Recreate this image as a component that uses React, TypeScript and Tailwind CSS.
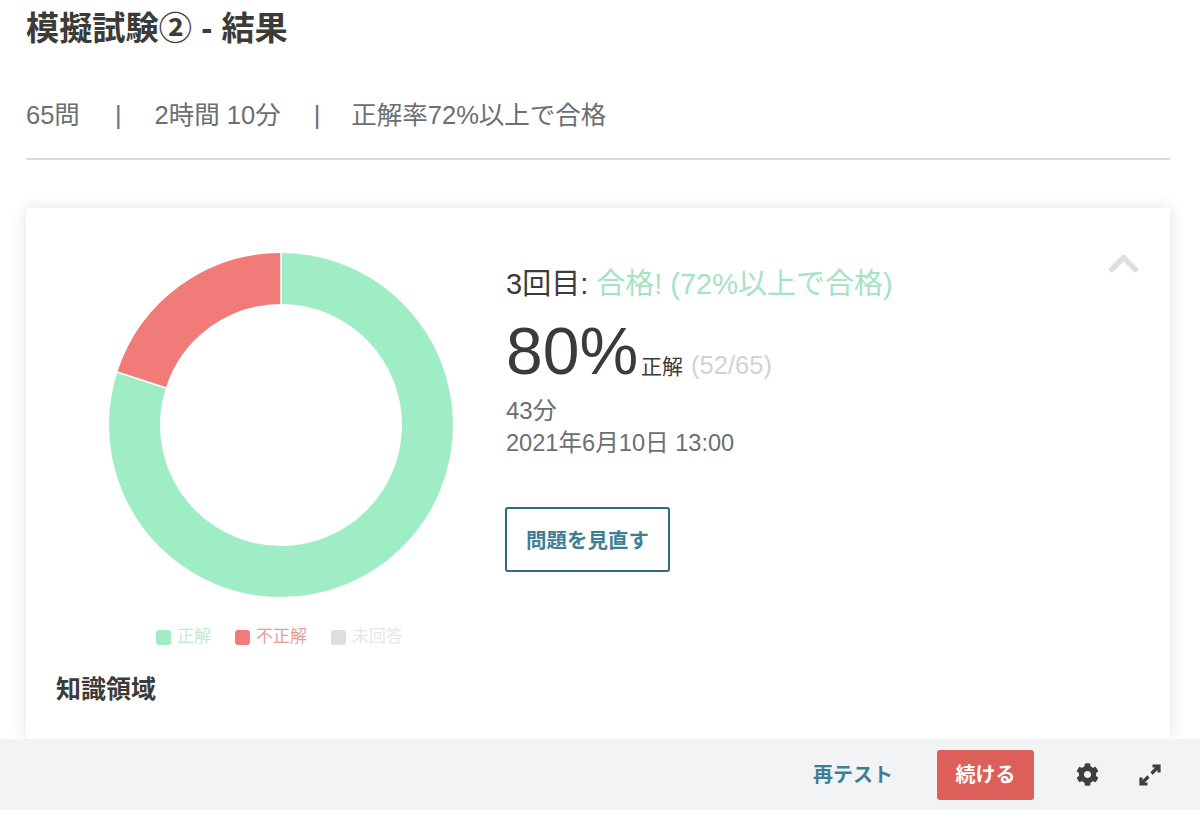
import { FaChevronUp, FaCog } from "react-icons/fa";

const FONT = "font-['Liberation_Sans','Noto_Sans_CJK_JP',sans-serif]";

const legend = [
  { label: "正解", box: "bg-[#9fedc5]", text: "text-[#bfe9d3]" },
  { label: "不正解", box: "bg-[#f07b78]", text: "text-[#e59c9a]" },
  { label: "未回答", box: "bg-[#dcdee0]", text: "text-[#e6e7e8]" },
];

function Donut() {
  const r = 146.5;
  const c = 2 * Math.PI * r;
  return (
    <svg width="346" height="346" viewBox="0 0 346 346" className="block">
      <g transform="rotate(-90 173 173)">
        <circle cx="173" cy="173" r={r} fill="none" stroke="#9fedc5" strokeWidth="51" strokeDasharray={`${c * 0.8} ${c}`} />
        <circle
          cx="173"
          cy="173"
          r={r}
          fill="none"
          stroke="#f07b78"
          strokeWidth="51"
          strokeDasharray={`${c * 0.2} ${c}`}
          strokeDashoffset={-c * 0.8}
        />
      </g>
      <line x1="173" y1="1" x2="173" y2="52" stroke="#fff" strokeWidth="1.5" />
      <line x1="9" y1="120" x2="58" y2="136" stroke="#fff" strokeWidth="1.5" />
    </svg>
  );
}

function ExpandIcon() {
  return (
    <svg width="24" height="24" viewBox="0 0 24 24" fill="none" stroke="#3e3e3e" strokeWidth="3.2" className="ml-[39px] block">
      <path d="M13.5 10.5 L20.5 3.5" />
      <path d="M14.5 3 H21 V9.5" />
      <path d="M10.5 13.5 L3.5 20.5" />
      <path d="M3 14.5 V21 H9.5" />
    </svg>
  );
}

export default function App() {
  return (
    <div className={`${FONT} flex h-[819px] w-[1200px] flex-col overflow-hidden bg-white`}>
      <main className="flex min-h-0 flex-1 flex-col overflow-hidden pr-[30px] pl-[26px]">
        <h1 className="mt-[7px] h-[44px] text-[33.2px] leading-[44px] font-bold text-[#3c3b37]">模擬試験② - 結果</h1>
        <div className="mt-[43px] flex h-[42px] items-center text-[25.5px] text-[#6a6f73]">
          <span>65問</span>
          <span className="ml-[35px]">|</span>
          <span className="ml-[33px]">2時間 10分</span>
          <span className="ml-[33px]">|</span>
          <span className="ml-[31px]">正解率72%以上で合格</span>
        </div>
        <div className="mt-[22px] h-[2px] shrink-0 bg-[#dcdcdc]" />

        <section className="mt-[48px] flex-1 bg-white pl-[30px] shadow-[0_0_16px_rgba(0,0,0,0.12)]">
          <div className="flex">
            <div className="ml-[52px] w-[346px] pt-[44px]">
              <Donut />
              <div className="mt-[29px] flex h-[20px] items-center pl-[48px] text-[17px]">
                {legend.map((item) => (
                  <div key={item.label} className="mr-[24px] flex items-center gap-[6px]">
                    <span className={`h-[15px] w-[15px] rounded-[3px] ${item.box}`} />
                    <span className={item.text}>{item.label}</span>
                  </div>
                ))}
              </div>
            </div>

            <div className="ml-[52px] flex-1 pt-[59px]">
              <div className="flex h-[36px] items-center text-[29px] text-[#3c3b37]">
                <span>3回目:</span>
                <span className="ml-[8px] text-[#a4e3c4]">合格! (72%以上で合格)</span>
              </div>
              <div className="mt-[12px] flex h-[72px] items-baseline text-[#3c3b37]">
                <span className="text-[66px] leading-[72px]">80%</span>
                <span className="ml-[3px] text-[21px]">正解</span>
                <span className="ml-[8px] text-[25.5px] text-[#d1d2d3]">(52/65)</span>
              </div>
              <div className="mt-[8px] text-[24px] leading-[32px] text-[#6a6f73]">43分</div>
              <div className="text-[23.6px] leading-[32px] text-[#6a6f73]">2021年6月10日 13:00</div>
              <button
                type="button"
                className="mt-[48px] -ml-px flex h-[65px] w-[165px] items-center justify-center rounded-[3px] border-2 border-[#2f6b7e] pt-[4px] text-[20.5px] font-bold text-[#3f7f94]"
              >
                問題を見直す
              </button>
            </div>

            <div className="pt-[38px] pr-[29px]">
              <FaChevronUp className="h-[35px] w-[35px] text-[#dcdee0]" />
            </div>
          </div>
          <h2 className="mt-[26px] text-[25px] leading-[32px] font-bold text-[#3c3b37]">知識領域</h2>
        </section>
      </main>

      <footer className="flex h-[71px] shrink-0 items-center justify-end bg-[#f1f3f5] pr-[38px]">
        <button type="button" className="text-[20px] font-bold text-[#3f7f94]">
          再テスト
        </button>
        <button
          type="button"
          className="ml-[44px] h-[50px] w-[97px] rounded-[3px] bg-[#dc5f59] text-[20px] font-bold text-white"
        >
          続ける
        </button>
        <FaCog className="ml-[42px] h-[23px] w-[23px] text-[#3e3e3e]" />
        <ExpandIcon />
      </footer>
      <div className="h-[9px] shrink-0 bg-white" />
    </div>
  );
}
